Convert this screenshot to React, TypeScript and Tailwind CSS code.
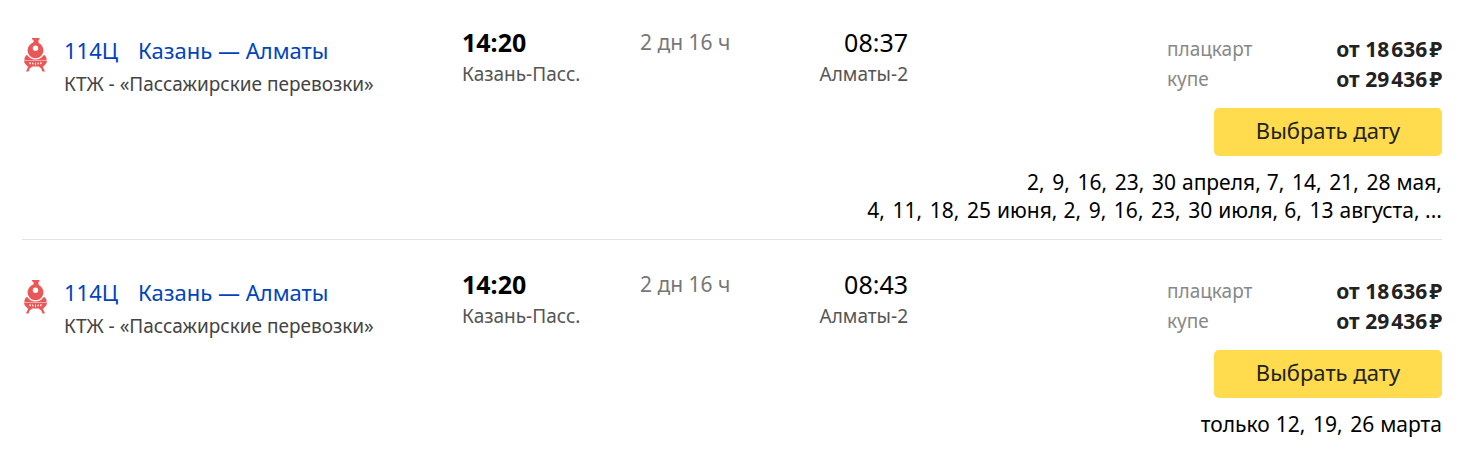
type Train = {
  arrival: string;
  dates: string[][];
};

const prices = [
  { place: "плацкарт", price: "от 18\u200A636\u200A₽" },
  { place: "купе", price: "от 29\u200A436\u200A₽" },
];

const trains: Train[] = [
  {
    arrival: "08:37",
    dates: [
      ["2, \u200A9, \u200A16, \u200A23, \u200A30", "апреля,", "7, \u200A14, \u200A21, \u200A28", "мая,"],
      [
        "4, \u200A11, \u200A18, \u200A25",
        "июня,",
        "2, \u200A9, \u200A16, \u200A23, \u200A30",
        "июля,",
        "6, \u200A13",
        "августа, ...",
      ],
    ],
  },
  {
    arrival: "08:43",
    dates: [["только", "12, \u200A19, \u200A26", "марта"]],
  },
];

const TrainIcon = () => (
  <svg viewBox="0 0 24 34" className="mt-3 ml-0.5 h-[34px] w-6 fill-[#eb5757]" aria-hidden="true">
    <path d="M8 0h7.500v1.200l-1 .8v4h-5V2L8 1.200z" />
    <path
      fillRule="evenodd"
      d="M11.500 4.300a8 8 0 1 1 0 16a8 8 0 0 1 0-16zM11.500 7.500a2.700 2.700 0 1 0 0 5.400a2.700 2.700 0 0 0 0-5.400z"
    />
    <path d="M2 17.200h1.500c2 3 4.500 4.200 8 4.200s6-1.200 8-4.200H21l1.500 2.800v2H.5v-2z" />
    <path
      fillRule="evenodd"
      d="M0 22.500h23l-.5 2.500l-3 3.500h-16L.5 25zM5.300 24.300l.3 1.600l1.200.3v-1.700zM8.200 24.600v1.700l1.200.1v-1.700zM11 24.600v2.600h1v-2.600zM14.800 24.600v1.700l-1.200.1v-1.700zM17.700 24.300l-.3 1.600l-1.200.3v-1.700z"
    />
    <path d="M4 28h4.500l-2 2H6L4.500 33.500H2L4.500 28zM19 28h-4.500l2 2h.5l1.500 3.500H21L18.500 28z" />
  </svg>
);

const TrainRow = ({ arrival, dates }: Train) => (
  <li className="border-t border-[#e4e4e4] pt-7 first:border-t-0 first:pt-[26px]">
    <div className="grid grid-cols-[42px_398fr_178fr_268fr_534fr]">
      <TrainIcon />
      <div className="pt-2">
        <a href="#" className="flex gap-5 text-[22px] leading-8 text-[#04b]">
          <span>114Ц</span>
          <span>Казань — Алматы</span>
        </a>
        <p className="mt-0.5 text-[19px] leading-8 text-[#444]">КТЖ - «Пассажирские перевозки»</p>
      </div>
      <div>
        <p className="text-[25px] leading-8 font-bold text-black">14:20</p>
        <p className="text-[19px] leading-8 text-[#555]">Казань-Пасс.</p>
      </div>
      <div className="flex items-start justify-between">
        <p className="text-[21px] leading-8 text-[#777]">2 дн 16 ч</p>
        <div className="text-right">
          <p className="text-[25px] leading-8 text-black">{arrival}</p>
          <p className="text-[19px] leading-8 text-[#555]">Алматы-2</p>
        </div>
      </div>
      <div className="ml-auto w-[275px] pt-2">
        <dl>
          {prices.map(({ place, price }) => (
            <div key={place} className="flex items-center justify-between">
              <dt className="text-[19px] leading-[30px] text-[#888]">{place}</dt>
              <dd className="text-[21px] leading-[30px] font-bold text-[#222]">{price}</dd>
            </div>
          ))}
        </dl>
        <button
          type="button"
          className="mt-3.5 ml-auto block h-12 w-[228px] rounded-[5px] bg-[#ffdb4d] pb-1 text-[22px] text-[#222]"
        >
          Выбрать дату
        </button>
      </div>
    </div>
    <div className="mt-3 pb-[15px] text-[21px] leading-7 text-black">
      {dates.map((line, i) => (
        <p key={i} className="flex justify-end gap-1.5 whitespace-nowrap">
          {line.map((part, j) => (
            <span key={j}>{part}</span>
          ))}
        </p>
      ))}
    </div>
  </li>
);

const App = () => {
  return (
    <main className="min-h-screen bg-white pr-[18px] pl-[22px] font-['Noto_Sans',sans-serif]">
      <ul>
        {trains.map((train) => (
          <TrainRow key={train.arrival} {...train} />
        ))}
      </ul>
    </main>
  );
};

export default App;
